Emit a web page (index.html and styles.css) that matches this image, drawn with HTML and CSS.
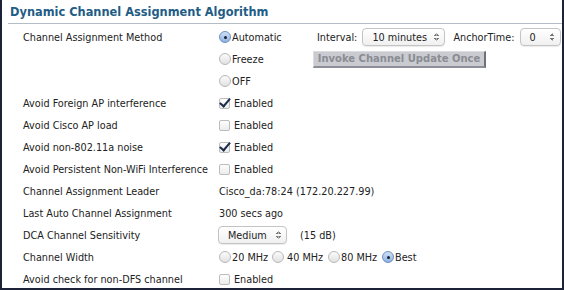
FILE: index.html
```html
<!DOCTYPE html>
<html lang="en">
<head>
    <meta charset="UTF-8">
    <title>Dynamic Channel Assignment Algorithm</title>
    <link rel="stylesheet" href="styles.css">
</head>
<body>

<div class="panel">
    <h2 class="title">Dynamic Channel Assignment Algorithm</h2>

    <div class="row">
        <span class="label">Channel Assignment Method</span>
        <div class="value method">
            <span class="opt"><span class="radio on"></span>Automatic</span>
            <span class="extra">
                Interval:
                <span class="select interval">10 minutes<span class="arrows"></span></span>
                AnchorTime:
                <span class="select anchor">0<span class="arrows"></span></span>
            </span>
        </div>
    </div>
    <div class="row">
        <span class="label"></span>
        <div class="value method">
            <span class="opt"><span class="radio"></span>Freeze</span>
            <span class="extra"><span class="btn">Invoke Channel Update Once</span></span>
        </div>
    </div>
    <div class="row">
        <span class="label"></span>
        <div class="value"><span class="opt"><span class="radio"></span>OFF</span></div>
    </div>

    <div class="row">
        <span class="label">Avoid Foreign AP interference</span>
        <div class="value"><span class="check on"></span>Enabled</div>
    </div>
    <div class="row">
        <span class="label">Avoid Cisco AP load</span>
        <div class="value"><span class="check"></span>Enabled</div>
    </div>
    <div class="row">
        <span class="label">Avoid non-802.11a noise</span>
        <div class="value"><span class="check on"></span>Enabled</div>
    </div>
    <div class="row">
        <span class="label">Avoid Persistent Non-WiFi Interference</span>
        <div class="value"><span class="check"></span>Enabled</div>
    </div>
    <div class="row">
        <span class="label">Channel Assignment Leader</span>
        <div class="value">Cisco_da:78:24 (172.20.227.99)</div>
    </div>
    <div class="row">
        <span class="label">Last Auto Channel Assignment</span>
        <div class="value">300 secs ago</div>
    </div>
    <div class="row">
        <span class="label">DCA Channel Sensitivity</span>
        <div class="value">
            <span class="select medium">Medium<span class="arrows"></span></span>
            <span class="db">(15 dB)</span>
        </div>
    </div>
    <div class="row">
        <span class="label">Channel Width</span>
        <div class="value widths">
            <span class="opt w20"><span class="radio"></span>20 MHz</span>
            <span class="opt w40"><span class="radio"></span>40 MHz</span>
            <span class="opt w80"><span class="radio"></span>80 MHz</span>
            <span class="opt"><span class="radio on"></span>Best</span>
        </div>
    </div>
    <div class="row">
        <span class="label">Avoid check for non-DFS channel</span>
        <div class="value"><span class="check"></span>Enabled</div>
    </div>
</div>

</body>
</html>
```

FILE: styles.css
```css
html, body, div, span, h2 {
    margin: 0;
    padding: 0;
}
body {
    width: 564px;
    height: 290px;
    background-color: #fff;
    font-family: "DejaVu Sans", Verdana, sans-serif;
    font-size: 9.7px;
    color: #222;
    white-space: nowrap;
}
.panel {
    box-sizing: border-box;
    width: 564px;
    height: 290px;
    border: 2px solid #1c2338;
    border-top: none;
}
.title {
    margin: 0 0 2px 6px;
    height: 23px;
    line-height: 24px;
    padding-left: 2px;
    font-size: 11.4px;
    font-weight: bold;
    color: #1f5c86;
    border-bottom: 1px solid #b4bcc6;
}
.row {
    display: flex;
    align-items: center;
    height: 22px;
}
.label {
    width: 196px;
    padding-left: 21px;
    flex-shrink: 0;
}
.value {
    display: flex;
    align-items: center;
}
.method .opt {
    width: 95px;
}
.opt {
    display: flex;
    align-items: center;
}
.extra {
    display: flex;
    align-items: center;
    padding-left: 3px;
}
.radio {
    box-sizing: border-box;
    display: inline-block;
    width: 12px;
    height: 12px;
    border-radius: 50%;
    border: 1px solid #b8b8b8;
    background: linear-gradient(#fbfbfb, #e2e2e2);
    margin-right: 1px;
    position: relative;
}
.radio.on {
    border-color: #6d8fc0;
    background: linear-gradient(#cfe0f6, #8fb2e2);
}
.radio.on::after {
    content: "";
    position: absolute;
    left: 3.5px;
    top: 3.5px;
    width: 3px;
    height: 3px;
    border-radius: 50%;
    background-color: #1a1f2c;
}
.check {
    box-sizing: border-box;
    display: inline-block;
    width: 11px;
    height: 11px;
    border: 1px solid #bcbcbc;
    border-radius: 2px;
    background: linear-gradient(#fdfdfd, #ececec);
    margin-right: 4px;
    position: relative;
}
.check.on::after {
    content: "";
    position: absolute;
    left: 2px;
    top: -3px;
    width: 4px;
    height: 9px;
    border: solid #1d2c4a;
    border-width: 0 2px 2px 0;
    transform: rotate(40deg);
}
.select {
    box-sizing: border-box;
    display: inline-flex;
    align-items: center;
    justify-content: space-between;
    height: 18px;
    padding: 0 5px 0 9px;
    border: 1px solid #c4c4c4;
    border-radius: 4px;
    background: linear-gradient(#ffffff, #f0f0f0);
    box-shadow: 0 1px 1px rgba(0,0,0,.08);
}
.arrows {
    display: inline-block;
    width: 5px;
    height: 8px;
    background:
        linear-gradient(to bottom right, transparent 50%, #777 50%) 0 0 / 2.5px 3px no-repeat,
        linear-gradient(to bottom left, transparent 50%, #777 50%) 2.5px 0 / 2.5px 3px no-repeat,
        linear-gradient(to top right, transparent 50%, #777 50%) 0 5px / 2.5px 3px no-repeat,
        linear-gradient(to top left, transparent 50%, #777 50%) 2.5px 5px / 2.5px 3px no-repeat;
}
.interval {
    width: 83px;
    margin: 0 8px 0 5px;
}
.anchor {
    width: 41px;
    margin-left: 5px;
}
.medium {
    width: 69px;
    margin-left: -1px;
}
.db {
    margin-left: 13px;
}
.btn {
    box-sizing: border-box;
    display: inline-block;
    width: 173px;
    height: 17px;
    line-height: 14px;
    margin-left: -4px;
    text-align: center;
    font-size: 10px;
    font-weight: bold;
    color: #8a8c92;
    background-color: #c9cbd1;
    border: 1px solid #dcdde1;
    border-right: 2px solid #6e717a;
    border-bottom: 2px solid #8c8f97;
}
.w20 {
    width: 53px;
}
.w40 {
    width: 56px;
}
.w80 {
    width: 54px;
}
.w40 .radio {
    margin-right: 3px;
}
```
